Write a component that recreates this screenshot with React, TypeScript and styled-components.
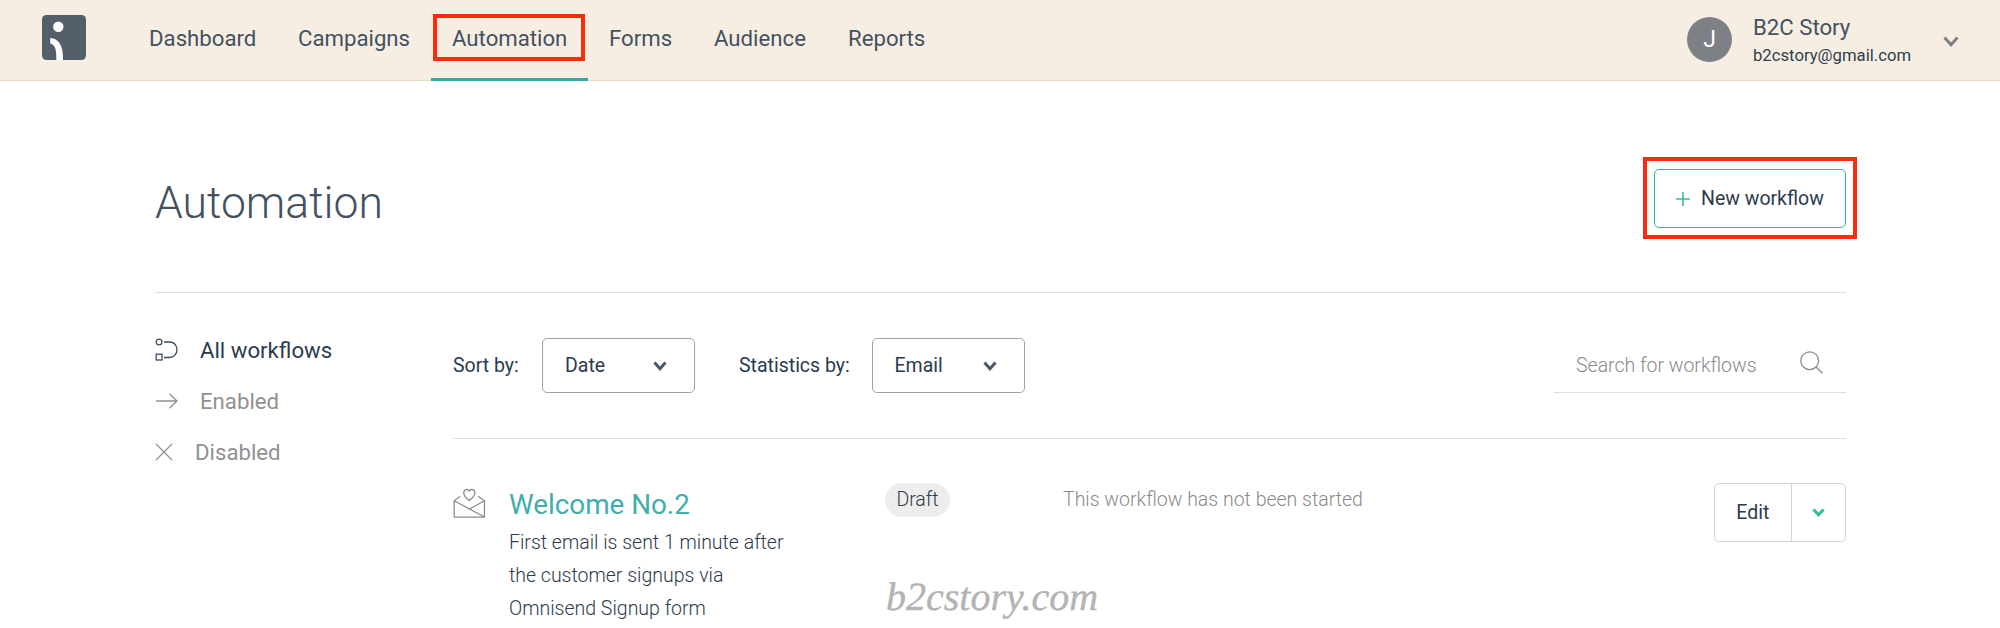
import React from "react";
import styled, { createGlobalStyle } from "styled-components";

const GlobalStyle = createGlobalStyle`
  *, *::before, *::after { box-sizing: border-box; }
  body {
    margin: 0;
    background: #fff;
    color: #2b3b4d;
    font-family: Roboto, "Liberation Sans", sans-serif;
    font-size: 19.5px;
    line-height: 1;
    overflow: hidden;
  }
  button { font: inherit; color: inherit; background: none; border: 0; padding: 0; }
`;

const Page = styled.div`
  width: 2000px;
  height: 628px;
  overflow: hidden;
  position: relative;
`;

const Header = styled.header`
  display: flex;
  height: 80.6px;
  padding-left: 42px;
  padding-right: 41px;
  background: #f7eee3;
  border-bottom: 1px solid #ecd9c5;
`;

const Logo = styled.svg`
  flex: none;
  width: 44px;
  height: 45px;
  margin: 15px 42px 0 0;
`;

const Nav = styled.nav`
  display: flex;
`;

const NavItem = styled.a<{ $active?: boolean; $width: number }>`
  position: relative;
  width: ${(p) => p.$width}px;
  height: 80.6px;
  padding: 26px 0 0 21px;
  font-size: 22.2px;
  line-height: 24px;
  color: #44515f;
  white-space: nowrap;
  border-bottom: 3px solid ${(p) => (p.$active ? "#2fa9a6" : "transparent")};
`;

const Highlight = styled.span<{ $inset: string }>`
  position: absolute;
  inset: ${(p) => p.$inset};
  border: 4px solid #fb2b0c;
  pointer-events: none;
`;

const Account = styled.div`
  display: flex;
  margin-left: auto;
`;

const Avatar = styled.div`
  display: grid;
  place-items: center;
  width: 45px;
  height: 45px;
  margin: 16.5px 21px 0 0;
  border-radius: 50%;
  background: #7d8085;
  color: #fff;
  font-size: 23px;
`;

const AccountText = styled.div`
  width: 190px;
  padding-top: 15px;
  color: #44515f;
`;

const AccountName = styled.div`
  font-size: 22.2px;
  line-height: 24px;
`;

const AccountMail = styled.div`
  margin-top: 7px;
  font-size: 16.7px;
  line-height: 20px;
  color: #2f3e4e;
`;

const ChevronSvg = styled.svg`
  flex: none;
  display: block;
`;

const AccountChevron = styled.div`
  width: 16px;
  padding-top: 36px;
`;

const Main = styled.main`
  margin: 0 154px 0 155px;
`;

const TitleBar = styled.div`
  display: flex;
  justify-content: space-between;
  align-items: flex-start;
  height: 212.4px;
  padding-top: 88.9px;
  border-bottom: 1px solid #dfdfdf;
`;

const Title = styled.h1`
  margin: 9px 0 0;
  font-size: 44.5px;
  line-height: 50px;
  font-weight: 300;
  color: #44515f;
`;

const NewButton = styled.button`
  position: relative;
  display: flex;
  align-items: center;
  width: 192px;
  height: 58.5px;
  padding-top: 1px;
  padding-left: 21px;
  gap: 11px;
  border: 1px solid #2fba8b;
  border-radius: 5px;
`;

const Body = styled.div`
  display: flex;
`;

const Sidebar = styled.aside`
  width: 298px;
  padding-top: 36px;
`;

const SideItem = styled.a<{ $active?: boolean; $gap: number; $height: number }>`
  display: flex;
  align-items: center;
  gap: ${(p) => p.$gap}px;
  height: ${(p) => p.$height}px;
  font-size: 22.2px;
  color: ${(p) => (p.$active ? "#2b3b4d" : "#919191")};
  svg { display: block; flex: none; }
`;

const Content = styled.section`
  flex: 1;
`;

const Toolbar = styled.div`
  display: flex;
  align-items: flex-start;
  height: 145.6px;
  padding-top: 45px;
  border-bottom: 1px solid #dfdfdf;
`;

const Label = styled.label<{ $width: number }>`
  width: ${(p) => p.$width}px;
  line-height: 56px;
  white-space: nowrap;
`;

const Select = styled.button`
  display: flex;
  align-items: center;
  justify-content: space-between;
  width: 153px;
  height: 55px;
  margin-right: 44px;
  padding: 1px 27px 0 22px;
  border: 1px solid #a3a3a3;
  border-radius: 5px;
`;

const Search = styled.div`
  display: flex;
  justify-content: space-between;
  width: 292px;
  height: 55px;
  margin-left: auto;
  padding: 0 23px 0 22px;
  border-bottom: 1px solid #dfdfdf;
  color: #8a8a8a;
  font-weight: 300;
  line-height: 56px;
  svg { display: block; margin-top: 13px; }
`;

const Row = styled.article`
  display: flex;
  padding-top: 44.5px;
`;

const RowIcon = styled.svg`
  flex: none;
  width: 32.5px;
  height: 30px;
  margin: 5px 23.5px 0 0;
`;

const RowText = styled.div`
  width: 376px;
`;

const RowTitle = styled.h2`
  margin: 4.5px 0 0;
  font-size: 27.8px;
  line-height: 34px;
  font-weight: 400;
  color: #42aeaa;
`;

const RowDesc = styled.p`
  width: 290px;
  margin: 4px 0 0;
  font-weight: 300;
  line-height: 33.3px;
`;

const StatusCell = styled.div`
  width: 178px;
`;

const Status = styled.span`
  display: block;
  width: 65px;
  height: 34px;
  border-radius: 17px;
  background: #ededed;
  text-align: center;
  font-weight: 300;
  line-height: 34px;
`;

const Stats = styled.p`
  margin: 0;
  font-weight: 300;
  line-height: 34px;
  color: #8a8a8a;
`;

const SplitButton = styled.div`
  display: flex;
  width: 132px;
  height: 58.5px;
  margin-left: auto;
  border: 1px solid #d4d4d4;
  border-radius: 5px;
`;

const EditButton = styled.button`
  width: 76.5px;
  padding-top: 1px;
  border-right: 1px solid #d4d4d4;
`;

const MoreButton = styled.button`
  flex: 1;
  display: grid;
  place-items: center;
`;

const Watermark = styled.div`
  position: absolute;
  left: 886px;
  top: 574px;
  font: italic 40px/46px "Liberation Serif", serif;
  text-rendering: geometricPrecision;
  color: #b3b3b3;
  -webkit-text-stroke: 0.4px #b3b3b3;
`;

const Chevron = ({ w, h, color, weight }: { w: number; h: number; color: string; weight: number }) => (
  <ChevronSvg width={w} height={h} viewBox={`0 0 ${w} ${h}`} fill="none">
    <path
      d={`M${weight / 2} ${weight / 2} L${w / 2} ${h - weight * 0.75} L${w - weight / 2} ${weight / 2}`}
      stroke={color}
      strokeWidth={weight}
    />
  </ChevronSvg>
);

const navItems = [
  { label: "Dashboard", width: 149 },
  { label: "Campaigns", width: 154 },
  { label: "Automation", width: 157, active: true },
  { label: "Forms", width: 105 },
  { label: "Audience", width: 134 },
  { label: "Reports", width: 120 },
];

export default function App() {
  return (
    <Page>
      <GlobalStyle />
      <Header>
        <Logo viewBox="0 0 44 45">
          <rect width="44" height="45" rx="4.5" fill="#555f69" />
          <circle cx="16.3" cy="11.7" r="5.2" fill="#fff" />
          <path d="M8.2 23 C16.5 23.5 21.3 30 21 45 H14.3 C14.6 35 13.5 30 8.2 28.6Z" fill="#fff" />
        </Logo>
        <Nav>
          {navItems.map((n) => (
            <NavItem key={n.label} $active={n.active} $width={n.width}>
              {n.label}
              {n.active && <Highlight $inset="14px 3.5px 16.6px 2px" />}
            </NavItem>
          ))}
        </Nav>
        <Account>
          <Avatar>J</Avatar>
          <AccountText>
            <AccountName>B2C Story</AccountName>
            <AccountMail>b2cstory@gmail.com</AccountMail>
          </AccountText>
          <AccountChevron>
            <Chevron w={16} h={11} color="#7d8085" weight={3} />
          </AccountChevron>
        </Account>
      </Header>
      <Main>
        <TitleBar>
          <Title>Automation</Title>
          <NewButton>
            <svg width="14" height="14" viewBox="0 0 14 14" stroke="#36bd90" strokeWidth="1.6">
              <path d="M7 0V14M0 7H14" />
            </svg>
            New workflow
            <Highlight $inset="-13.5px -11.5px -12.5px -12px" />
          </NewButton>
        </TitleBar>
        <Body>
          <Sidebar>
            <SideItem $active $gap={22} $height={42}>
              <svg width="23" height="24" viewBox="0 0 23 24" fill="none" stroke="#3b4a5a" strokeWidth="1.3">
                <circle cx="4" cy="4" r="2.9" />
                <rect x="1.2" y="16.2" width="5.8" height="5.8" />
                <path d="M9 4H14.5C19 4 22 7.5 22 11.7S19 19.5 14.5 19.5H9" />
              </svg>
              All workflows
            </SideItem>
            <SideItem $gap={22} $height={61}>
              <svg width="23" height="16" viewBox="0 0 23 16" fill="none" stroke="#919191" strokeWidth="1.3">
                <path d="M1 8H22M14.5 0.8L22 8L14.5 15.2" />
              </svg>
              Enabled
            </SideItem>
            <SideItem $gap={22} $height={41}>
              <svg width="18" height="18" viewBox="0 0 18 18" stroke="#919191" strokeWidth="1.3">
                <path d="M1 1L17 17M17 1L1 17" />
              </svg>
              Disabled
            </SideItem>
          </Sidebar>
          <Content>
            <Toolbar>
              <Label $width={89}>Sort by:</Label>
              <Select>
                Date
                <Chevron w={14} h={10} color="#4b5866" weight={3} />
              </Select>
              <Label $width={132.5}>Statistics by:</Label>
              <Select>
                Email
                <Chevron w={14} h={10} color="#4b5866" weight={3} />
              </Select>
              <Search>
                Search for workflows
                <svg width="23" height="23" viewBox="0 0 23 23" fill="none" stroke="#8a8a8a" strokeWidth="1.3">
                  <circle cx="9.7" cy="9.7" r="8.9" />
                  <path d="M16 16L22.5 22.3" />
                </svg>
              </Search>
            </Toolbar>
            <Row>
              <RowIcon viewBox="0 0 33 31" fill="none" stroke="#8c8c8c" strokeWidth="1.3">
                <path d="M7.2 8.5L0.9 13.2V30H32.2V13.2L25.6 8.5M0.9 13.2L32.2 30M32.2 13.2L16.5 22" />
                <path d="M16.5 13C12.8 10.2 10.8 7.8 10.8 5.2C10.8 1.2 15.3 0.5 16.5 3.2C17.8 0.5 22.3 1.2 22.3 5.2C22.3 7.8 20.2 10.2 16.5 13Z" />
              </RowIcon>
              <RowText>
                <RowTitle>Welcome No.2</RowTitle>
                <RowDesc>First email is sent 1 minute after the customer signups via Omnisend Signup form</RowDesc>
              </RowText>
              <StatusCell>
                <Status>Draft</Status>
              </StatusCell>
              <Stats>This workflow has not been started</Stats>
              <SplitButton>
                <EditButton>Edit</EditButton>
                <MoreButton>
                  <Chevron w={13} h={9} color="#2fc08f" weight={3} />
                </MoreButton>
              </SplitButton>
            </Row>
          </Content>
        </Body>
      </Main>
      <Watermark>b2cstory.com</Watermark>
    </Page>
  );
}
